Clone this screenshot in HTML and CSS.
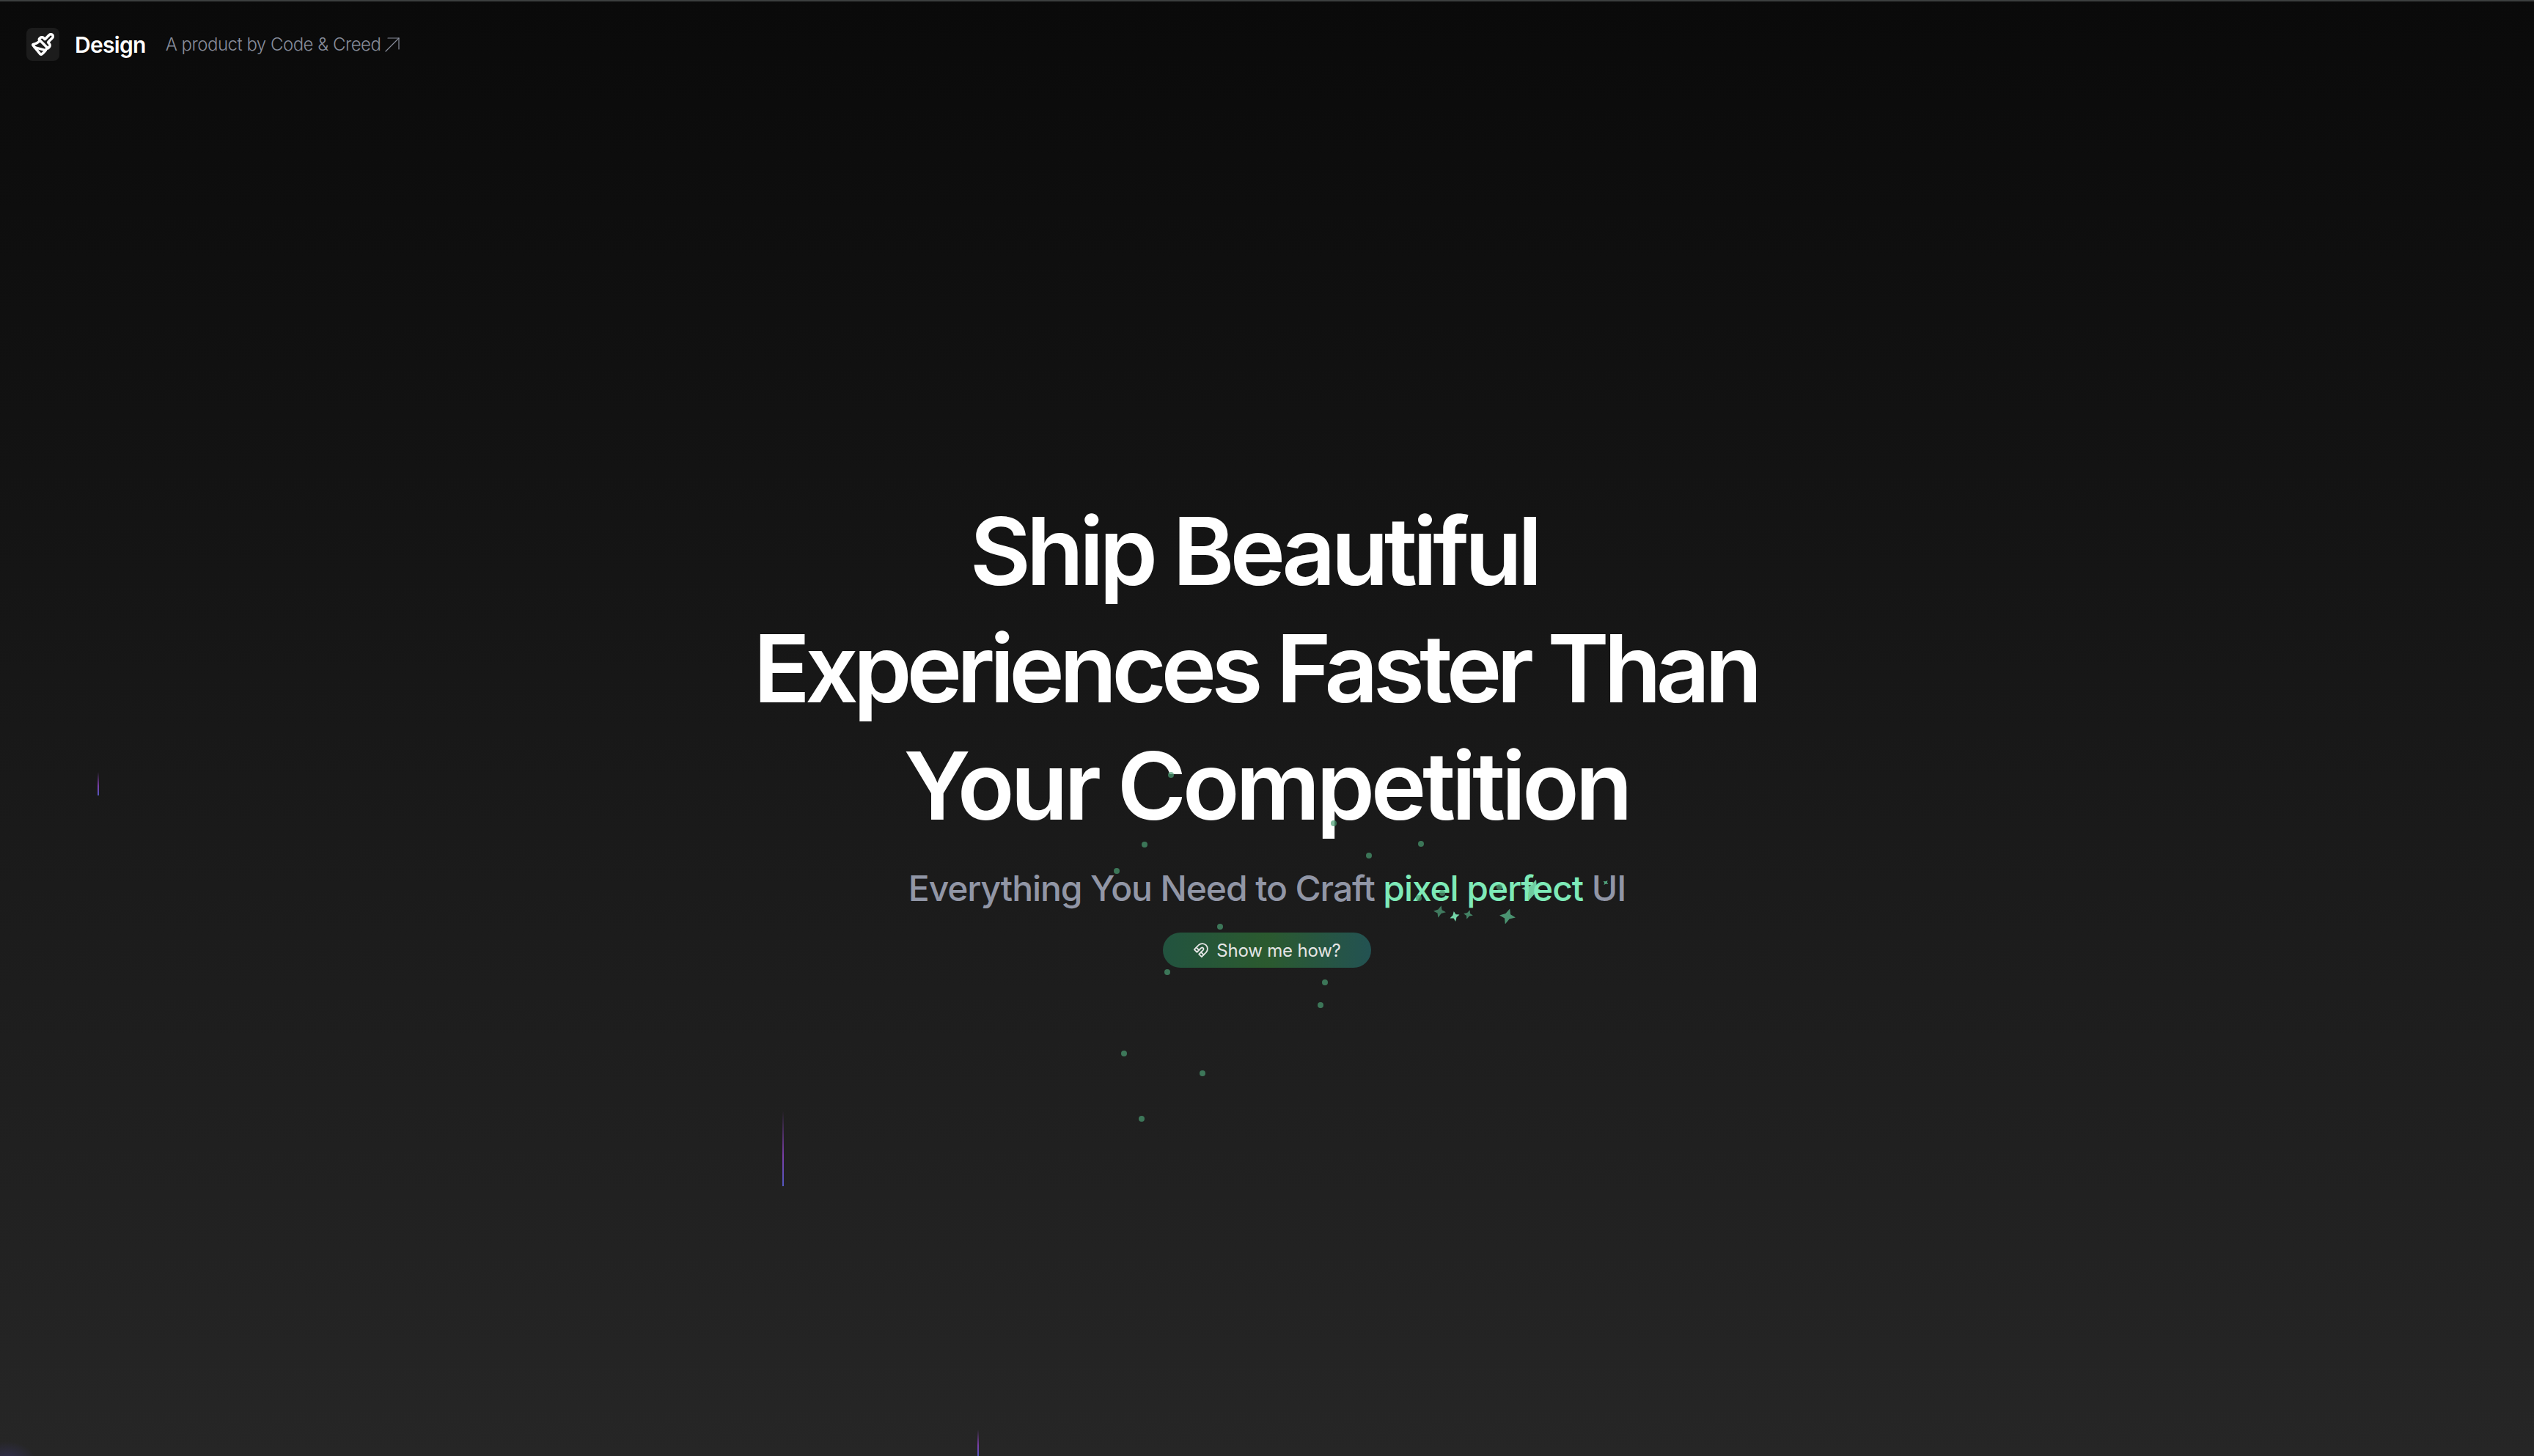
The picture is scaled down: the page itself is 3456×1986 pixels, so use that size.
FILE: index.html
```html
<!DOCTYPE html>
<html lang="en">
<head>
    <meta charset="UTF-8">
    <title>Design</title>
    <link rel="stylesheet" href="styles.css">
</head>
<body>
    <header class="topbar">
        <div class="logo-box">
            <svg class="logo-icon" viewBox="0 0 24 24" fill="none" stroke="currentColor" stroke-width="2.6" stroke-linecap="round" stroke-linejoin="round">
                <path d="m14.622 17.897-10.68-2.913"/>
                <path d="M18.376 2.622a1 1 0 1 1 3.002 3.002L17.36 9.643a.5.5 0 0 0 0 .707l.944.944a2.41 2.41 0 0 1 0 3.408l-.944.944a.5.5 0 0 1-.707 0L8.354 7.348a.5.5 0 0 1 0-.707l.944-.944a2.41 2.41 0 0 1 3.408 0l.944.944a.5.5 0 0 0 .707 0z"/>
                <path d="M9 8c-1.804 2.71-3.97 3.46-6.583 3.948a.507.507 0 0 0-.302.819l7.32 8.883a1 1 0 0 0 1.185.204C12.735 20.405 16 16.792 16 15"/>
            </svg>
        </div>
        <span class="brand">Design</span>
        <a class="tagline" href="#">A product by Code &amp; Creed
            <svg class="tagline-arrow" viewBox="0 0 24 24" fill="none" stroke="currentColor" stroke-width="1.2" stroke-linecap="round" stroke-linejoin="round">
                <path d="M3 21 21 3"/>
                <path d="M6 3h15v15"/>
            </svg>
        </a>
    </header>

    <main class="hero">
        <h1 class="hero-title">
            <span class="line line-one">Ship Beautiful</span>
            <span class="line line-two">Experiences Faster Than</span>
            <span class="line line-three">Your Competition</span>
        </h1>
        <p class="hero-sub">Everything You Need to Craft <span class="accent">pixel perfect</span> UI</p>
        <button class="cta">
            <svg class="cta-icon" viewBox="0 0 24 24" fill="none" stroke="currentColor" stroke-width="2" stroke-linecap="round" stroke-linejoin="round">
                <path d="m6 15-4-4 6.75-6.77a7.79 7.79 0 0 1 11 11L13 22l-4-4 6.39-6.36a2.14 2.14 0 0 0-3-3L6 15"/>
                <path d="m5 8 4 4"/>
                <path d="m12 15 4 4"/>
            </svg>
            Show me how?
        </button>
    </main>

    <!-- particles over the hero -->
    <div class="particles">
        <i class="dot d1"></i><i class="dot d2"></i><i class="dot d3"></i><i class="dot d4"></i>
        <i class="dot d5"></i><i class="dot d6"></i><i class="dot d7"></i><i class="dot d8"></i>
        <i class="dot d9"></i><i class="dot d10"></i><i class="dot d11"></i><i class="dot d12"></i>
        <i class="dot d13"></i><i class="dot d14"></i><i class="dot d15"></i><i class="dot d16"></i>

        <svg class="star s1" viewBox="0 0 24 24"><path d="M13 0 15.8 8.2 24 11 15.6 15 11 24 8.4 15.6 0 13 8.4 8.4z"/></svg>
        <svg class="star s2" viewBox="0 0 24 24"><path d="M13 0 15.8 8.2 24 11 15.6 15 11 24 8.4 15.6 0 13 8.4 8.4z"/></svg>
        <svg class="star s3" viewBox="0 0 24 24"><path d="M13 0 15.8 8.2 24 11 15.6 15 11 24 8.4 15.6 0 13 8.4 8.4z"/></svg>
        <svg class="star s4" viewBox="0 0 24 24"><path d="M13 0 15.8 8.2 24 11 15.6 15 11 24 8.4 15.6 0 13 8.4 8.4z"/></svg>
        <svg class="star s5" viewBox="0 0 24 24"><path d="M13 0 15.8 8.2 24 11 15.6 15 11 24 8.4 15.6 0 13 8.4 8.4z"/></svg>
        <svg class="star s6" viewBox="0 0 24 24"><path d="M13 0 15.8 8.2 24 11 15.6 15 11 24 8.4 15.6 0 13 8.4 8.4z"/></svg>
    </div>

    <!-- falling beams -->
    <i class="beam b1"></i>
    <i class="beam b2"></i>
    <i class="beam b3"></i>
    <i class="glow"></i>
</body>
</html>
```

FILE: styles.css
```css
html, body {
    height: 100%;
}

body {
    position: relative;
    box-sizing: border-box;
    margin: 0;
    overflow: hidden;
    border-top: 2px solid #3c3f3f;
    background: linear-gradient(to bottom, #0a0a0a, #262626);
    font-family: Inter, "Open Sans", sans-serif;
    color: #fff;
}

.topbar {
    display: flex;
    align-items: center;
    padding: 36px 36px 0;
}

.logo-box {
    display: flex;
    align-items: center;
    justify-content: center;
    width: 45px;
    height: 45px;
    border-radius: 8px;
    background: #1c1c1c;
}

.logo-icon {
    width: 33px;
    height: 33px;
}

.brand {
    margin-left: 21px;
    font-size: 30px;
    font-weight: 600;
    letter-spacing: -0.7px;
}

.tagline {
    display: flex;
    align-items: center;
    gap: 4px;
    margin-left: 27px;
    font-size: 24px;
    font-weight: 300;
    letter-spacing: -0.5px;
    color: #878c9a;
    text-decoration: none;
}

.tagline-arrow {
    width: 24px;
    height: 24px;
}

.hero {
    display: flex;
    flex-direction: column;
    align-items: center;
    padding-top: 589px;
}

.hero-title {
    margin: 0;
    font-size: 128px;
    line-height: 160px;
    font-weight: 580;
    letter-spacing: -7.1px;
    text-align: center;
}

.line {
    display: block;
}

.line-one {
    padding-right: 36px;
    letter-spacing: -6.15px;
}

.line-two {
    padding-right: 32px;
}

.line-three {
    padding-right: 2px;
    letter-spacing: -5.35px;
}

.hero-sub {
    margin: 24px 0 0;
    font-size: 48px;
    line-height: 72px;
    font-weight: 500;
    letter-spacing: -1.1px;
    color: #9196a6;
}

.accent {
    color: #7eeab8;
}

.cta {
    display: flex;
    align-items: center;
    justify-content: center;
    gap: 10px;
    width: 284px;
    height: 48px;
    margin-top: 24px;
    padding: 0;
    border: none;
    border-radius: 24px;
    background: linear-gradient(to right, #22533f, #2b5a2f 50%, #235252);
    color: #e5e5e5;
    font-family: inherit;
    font-size: 24px;
    letter-spacing: -0.2px;
}

.cta-icon {
    width: 22px;
    height: 22px;
}

/* particles */
.particles {
    position: absolute;
    inset: 0;
    pointer-events: none;
}

.dot {
    position: absolute;
    width: 8px;
    height: 8px;
    margin: -4px 0 0 -4px;
    border-radius: 50%;
    background: #4a9c72;
    opacity: 0.7;
}

.d1 { left: 1592px; top: 1324px; }
.d2 { left: 1807px; top: 1338px; }
.d3 { left: 1801px; top: 1369px; }
.d4 { left: 1533px; top: 1435px; }
.d5 { left: 1640px; top: 1462px; }
.d6 { left: 1557px; top: 1524px; }
.d7 { left: 1664px; top: 1262px; }
.d8 { left: 1561px; top: 1150px; }
.d9 { left: 1938px; top: 1149px; }
.d10 { left: 1867px; top: 1165px; }
.d11 { left: 1523px; top: 1186px; }
.d12 { left: 1819px; top: 1121px; }
.d13 { left: 1597px; top: 1055px; }
.d14 { left: 1967px; top: 1216px; }
.d15 { left: 1935px; top: 1223px; }
.d16 { left: 2045px; top: 1208px; }

.star {
    position: absolute;
    fill: #5fc796;
}

.s1 { left: 1955px; top: 1233px; width: 17px; height: 17px; opacity: 0.55; transform: rotate(10deg); }
.s2 { left: 1977px; top: 1241px; width: 14px; height: 14px; opacity: 0.9; transform: rotate(-15deg); fill: #7eeab8; }
.s3 { left: 1996px; top: 1239px; width: 13px; height: 13px; opacity: 0.6; transform: rotate(15deg); }
.s4 { left: 2045px; top: 1237px; width: 22px; height: 22px; opacity: 0.7; transform: rotate(12deg); }
.s5 { left: 2075px; top: 1197px; width: 30px; height: 30px; opacity: 0.85; transform: rotate(15deg); fill: #7eeab8; }
.s6 { left: 2186px; top: 1198px; width: 8px; height: 8px; opacity: 0.8; transform: rotate(35deg); }

/* beams */
.beam {
    position: absolute;
    width: 2px;
    background: linear-gradient(to bottom, transparent, #7a3ea8 60%, #5458c0);
}

.b1 { left: 1067px; top: 1513px; height: 103px; }
.b2 { left: 133px; top: 1051px; height: 32px; }
.b3 { left: 1333px; top: 1948px; height: 36px; }

.glow {
    position: absolute;
    left: -30px;
    bottom: -40px;
    width: 80px;
    height: 60px;
    border-radius: 50%;
    background: radial-gradient(closest-side, rgba(80, 70, 190, 0.3), transparent);
}
```
